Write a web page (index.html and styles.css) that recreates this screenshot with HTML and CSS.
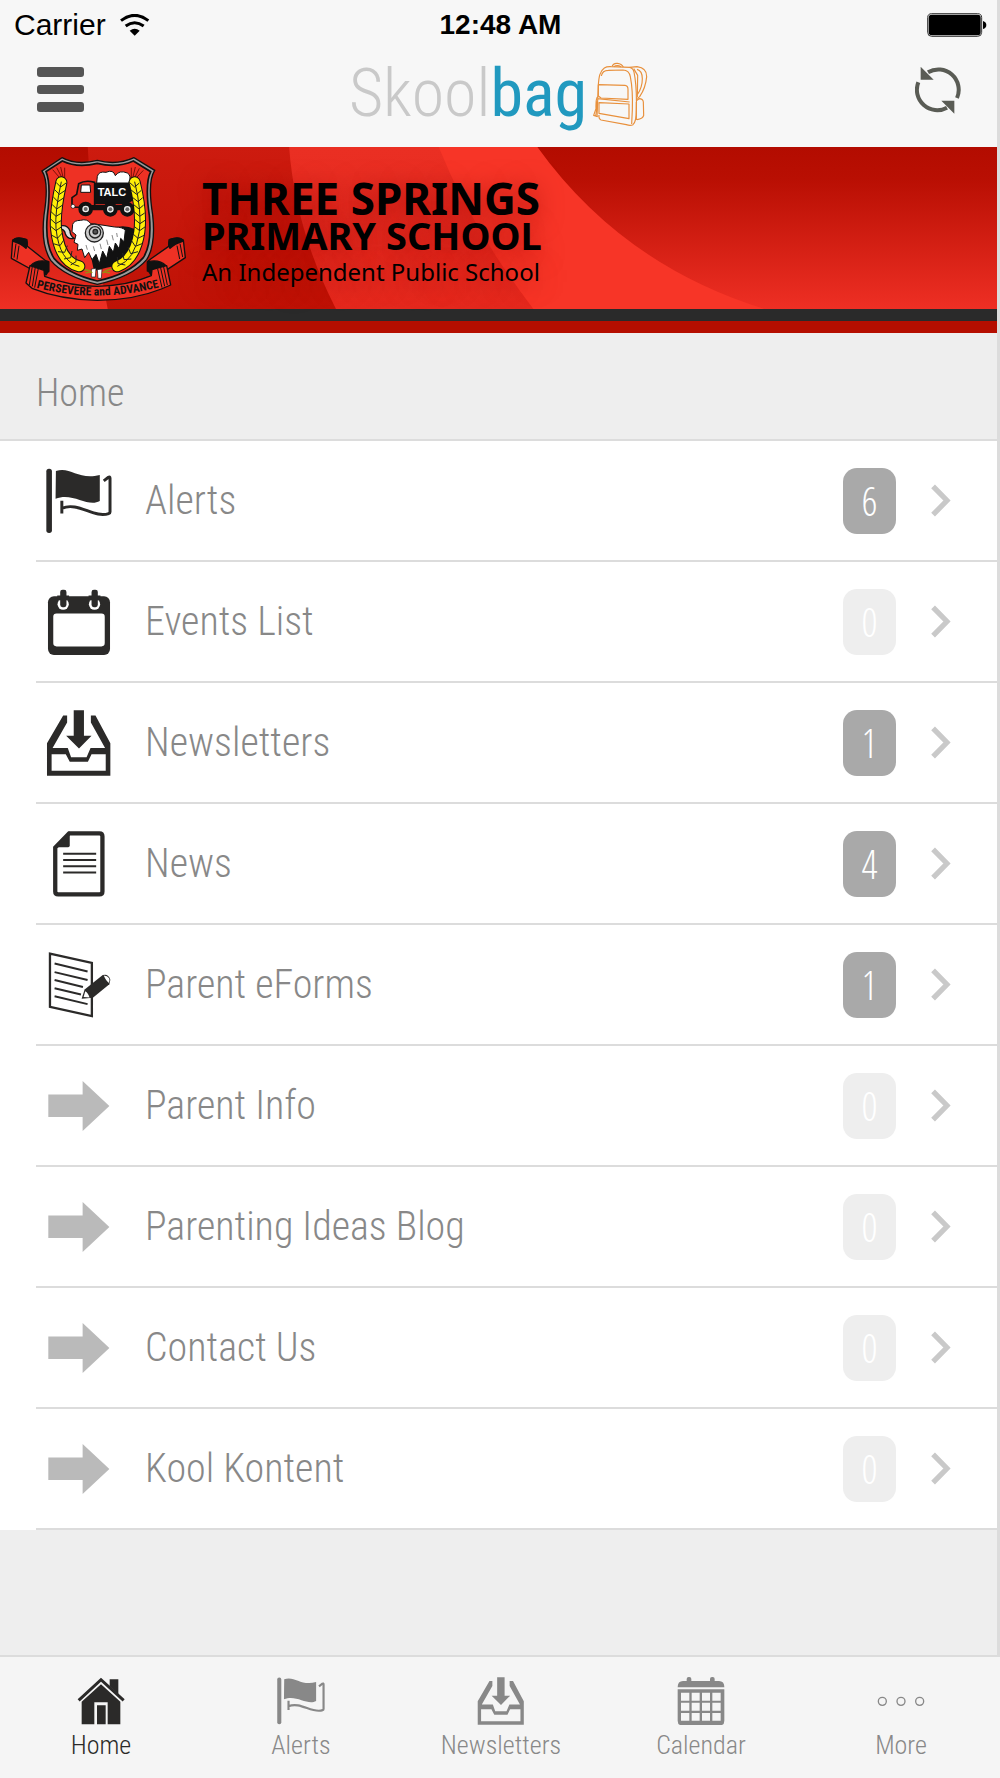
FILE: index.html
```html
<!DOCTYPE html>
<html lang="en">
<head>
<meta charset="utf-8">
<meta name="viewport" content="width=device-width, initial-scale=1">
<title>Skoolbag - Three Springs Primary School</title>
<link rel="stylesheet" href="styles.css">
</head>
<body>
<svg class="sprite" aria-hidden="true">
  <symbol id="flag" viewBox="0 0 200 200">
    <rect x="1" y="2" width="17" height="195" rx="8"/>
    <path d="M30 9C74-6 98 38 163 21V100C126 121 82 72 29 93Z"/>
    <path d="M175 39l14-11q5-3 5 3V133q0 4-4 5C146 154 98 101 48 122M48 99V138" fill="none" stroke="currentColor" stroke-width="9"/>
  </symbol>
  <symbol id="inbox" viewBox="0 0 200 200">
    <path fill-rule="evenodd" d="M3 101L52 17H64V38L20 115H66L76 143H123L135 115H179L136 38V17H150L195 101V199H3ZM17 134V184H181V134H138L127 157H72L60 134Z"/>
    <path d="M84 1H115V78H138L100 117L61 78H84Z"/>
  </symbol>
  <symbol id="arrow" viewBox="0 0 200 200">
    <path d="M7 65H111V24L192 100L111 176V133H7Z"/>
  </symbol>
  <symbol id="chevron" viewBox="0 0 60 100">
    <path d="M6 7L48 50L6 93" fill="none" stroke="currentColor" stroke-width="16"/>
  </symbol>
</svg>

<div class="screen">
  <div class="status">
    <div class="carrier">Carrier
      <svg width="30" height="22" viewBox="356 38 90 66" aria-label="Wi-Fi"><path d="M359 58Q400 26 441 58M373 74Q400 54 427 74" fill="none" stroke="#000" stroke-width="9"/><path d="M385 88Q400 77 415 88L400 103Z"/></svg>
    </div>
    <time class="clock">12:48 AM</time>
    <svg class="battery" width="60" height="24" viewBox="0 0 180 72" aria-label="Battery full"><rect x="2" y="2" width="162" height="68" rx="12" fill="none" stroke="#333" stroke-width="3"/><rect x="5" y="5" width="156" height="62" rx="9"/><path d="M168 24q10 3 10 12t-10 12Z"/></svg>
  </div>

  <header class="navbar">
    <button class="icon-button" type="button" aria-label="Menu">
      <svg width="48" height="46" viewBox="0 0 48 46" fill="#555"><rect x="1" width="47" height="10" rx="3"/><rect x="1" y="18" width="47" height="9" rx="3"/><rect x="1" y="35" width="47" height="10" rx="3"/></svg>
    </button>
    <div class="logo"><span class="logo-skool">Skool</span><span class="logo-bag">bag</span>
      <svg width="55" height="64" viewBox="276 186 165 192" fill="none" stroke="#e8903c" stroke-width="3.5" stroke-linejoin="round" aria-hidden="true">
        <path d="M292 254C294 230 296 214 310 204Q318 199 330 200L386 202Q396 204 399 216Q408 260 406 330Q406 366 396 374Q388 378 376 374L300 360Q292 356 294 345"/>
        <path d="M301 228Q304 211 322 211L366 210Q384 210 388 230Q396 270 394 330L392 372"/>
        <path d="M333 200Q336 189 349 190Q362 191 367 201M338 200Q349 194 360 200"/>
        <path d="M386 202L408 200Q438 204 437 230Q434 264 416 290L409 296M408 208Q424 212 424 236Q424 262 409 284M398 206L410 226L409 292"/>
        <path d="M292 254L372 256Q381 257 381 268V298L300 294L292 288Z"/>
        <path d="M290 296L386 306M294 308L384 312V356L294 340ZM292 254L288 350"/>
        <path d="M290 290Q284 296 285 326L278 346L290 350M288 304V326L284 348"/>
        <path d="M406 302L414 296Q426 296 427 306L428 346Q426 356 408 359M406 306V360"/>
      </svg>
    </div>
    <button class="icon-button refresh" type="button" aria-label="Refresh">
      <svg width="46" height="48" viewBox="1244 196 138 144" fill="none" stroke="#5a5c55" stroke-width="12" aria-hidden="true"><path d="M1283 215A61 61 0 0 1 1370 292M1254 245A61 61 0 0 0 1340 321"/><path d="M1261 198V237H1300ZM1362 339V300H1323Z" fill="#5a5c55" stroke="none"/></svg>
    </button>
  </header>

  <section class="banner">
    <svg class="banner-art" viewBox="0 0 1000 162" preserveAspectRatio="none" aria-hidden="true">
      <defs>
        <linearGradient id="g1" x2="0" y2="1"><stop offset="0" stop-color="#b30c00"/><stop offset=".2" stop-color="#b90f03"/><stop offset="1" stop-color="#ee2f24"/></linearGradient>
        <linearGradient id="g2" x2="0" y2="1"><stop offset="0" stop-color="#cd1b0f"/><stop offset="1" stop-color="#bf1206"/></linearGradient>
        <linearGradient id="g3" x2="0" y2="1"><stop offset="0" stop-color="#ea2f23"/><stop offset="1" stop-color="#e5291e"/></linearGradient>
      </defs>
      <rect width="1000" height="162" fill="url(#g1)"/>
      <path d="M88 0H310L340 162H108Q92 80 88 0Z" fill="url(#g2)"/>
      <path d="M290 0H480L600 162H337Q296 82 290 0Z" fill="url(#g3)"/>
      <path d="M440 0H539Q624 118 767 162H535Q472 80 440 0Z" fill="#f73527"/>
    </svg>
    <div class="banner-content">
      <svg class="crest" viewBox="24 30 540 444" role="img" aria-label="Three Springs Primary School crest">
        <g stroke="#111" stroke-width="4" stroke-linejoin="round">
          <path d="M38 285Q54 274 80 284L82 304L138 348L146 350V380L92 372L34 340Z" fill="#ee3124"/>
          <path d="M550 285Q534 274 508 284L506 304L452 342L442 350V378L498 376L556 338Z" fill="#ee3124"/>
          <path d="M38 288Q48 272 80 284Q84 300 78 310Q64 296 38 288ZM550 288Q540 272 508 284Q504 300 510 310Q524 296 550 288ZM92 362Q110 342 146 350V378L138 390Q122 370 92 362ZM498 362Q478 342 444 350V376L452 388Q470 370 498 362Z" fill="#111"/>
          <path d="M90 362L132 376L134 394Q212 424 292 424Q384 422 454 392L456 374L500 362L512 420L484 432Q400 466 292 466Q180 464 96 430L78 414Z" fill="#ee3124"/>
          <path d="M97 364L88 420M106 366L97 424M115 370L104 428M491 366L502 420M482 369L494 424M473 372L486 428M48 296L42 338M57 302L51 344M540 296L548 336M531 302L539 342" fill="none" stroke-width="3"/>
        </g>
        <path d="M186 38Q230 62 292 46Q350 62 402 38L464 76Q442 110 458 210Q468 300 440 344Q396 396 292 418Q192 394 152 346Q122 300 132 210Q148 110 126 78Z" fill="#999" stroke="#111" stroke-width="4"/>
        <path d="M187 48Q232 70 292 55Q350 70 400 48L452 80Q434 116 448 212Q456 298 430 338Q386 388 292 408Q202 386 162 340Q134 296 142 212Q154 118 138 80Z" fill="#ee3124" stroke="#111" stroke-width="5"/>
        <path d="M292 94Q296 78 318 82Q340 72 346 92Q358 74 382 84Q396 92 386 114H290Z" fill="#fff" stroke="#111" stroke-width="3"/>
        <path d="M216 186V158L230 148L236 116Q256 104 284 112V188Z" fill="#e0281c" stroke="#111" stroke-width="5"/>
        <path d="M244 120H270L272 142H242Z" fill="#fff" stroke="#111" stroke-width="3"/>
        <path d="M284 114H400V166L380 178H284ZM238 180H396V196H238Z" fill="#111"/>
        <text x="293" y="153" font-family="Liberation Sans, sans-serif" font-weight="700" font-size="33" fill="#fff">TALC</text>
        <g fill="#eee" stroke="#111" stroke-width="12"><circle cx="257" cy="192" r="16"/><circle cx="331" cy="193" r="16"/><circle cx="382" cy="193" r="16"/></g>
        <g fill="#666"><circle cx="257" cy="192" r="6"/><circle cx="331" cy="193" r="6"/><circle cx="382" cy="193" r="6"/></g>
        <circle cx="219" cy="184" r="6" fill="#fff" stroke="#111" stroke-width="2"/>
        <path d="M330 252Q370 236 404 252Q424 300 392 338Q370 360 320 368L282 378L272 330Z" fill="#111"/>
        <path d="M218 238Q222 226 242 226Q262 220 272 236Q310 240 344 246Q368 246 376 256L372 290L362 280L358 312L346 294L340 322L328 304L320 340L308 318L298 356L288 328L276 344L266 322L254 338L246 312L232 316L234 298L222 292L228 270L216 260Z" fill="#fff" stroke="#111" stroke-width="3"/>
        <path d="M300 296L304 312M320 284L324 300M336 270L340 286M258 300L262 314M280 304L284 318M350 264L352 276" stroke="#888" stroke-width="3"/>
        <g fill="none" stroke="#222" stroke-width="4"><circle cx="283" cy="264" r="27" fill="#ccc"/><circle cx="285" cy="262" r="17"/><circle cx="286" cy="260" r="7" fill="#555"/></g>
        <path d="M176 244Q202 236 210 258Q210 272 222 280Q202 284 196 266Q194 252 176 250Z" fill="#ddd" stroke="#111" stroke-width="4"/>
        <path d="M274 372L288 370L286 396H274ZM292 374L306 372L304 400H294Z" fill="#fff" stroke="#111" stroke-width="2"/>
        <path d="M240 374Q270 372 276 384M346 372Q320 372 308 384M256 384L272 380M330 384L312 380" fill="none" stroke="#9a8a10" stroke-width="5"/>
        <path d="M158 74L184 104M170 68L188 102M182 66L190 100M194 68V100M430 76L404 104M418 70L402 102M406 66L398 100M394 68V100" stroke="#7a1008" stroke-width="3"/>
        <g fill="none" stroke="#111" stroke-width="36" stroke-linecap="round"><path d="M184 112Q164 200 168 250Q178 350 238 364"/><path d="M404 112Q426 200 418 260Q406 344 352 364"/></g>
        <g fill="none" stroke="#ffee08" stroke-width="30" stroke-linecap="round"><path d="M184 112Q164 200 168 250Q178 350 238 364"/><path d="M404 112Q426 200 418 260Q406 344 352 364"/></g>
        <g fill="none" stroke="#222" stroke-width="3">
          <path d="M184 110Q164 200 168 250Q178 350 238 364M404 110Q426 200 418 260Q406 344 352 364"/>
          <path d="M168 112l14 14l16-12M164 134l14 14l18-12M160 156l14 14l18-12M156 178l14 14l18-12M153 200l15 14l17-10M152 222l15 14l18-10M152 244l16 13l17-12M154 270l18 10l15-16M160 296l20 6l12-18M174 320l20 2l8-20M192 342l20-4l4-20M212 360l16-10l0-18"/>
          <path d="M388 112l16 14l14-12M392 134l18 14l14-12M396 156l18 14l14-12M400 178l17 14l14-12M402 200l17 14l15-10M403 222l17 14l15-10M402 244l17 13l17-12M398 266l16 14l20-10M394 286l12 18l20-8M384 306l8 20l22-6M368 324l4 20l22-2M352 336l2 20l22 4"/>
        </g>
        <path id="motto" d="M109 428Q290 476 480 426" fill="none"/>
        <text font-family="Roboto Condensed, sans-serif" font-weight="700" font-size="35" fill="#111"><textPath href="#motto">PERSEVERE and ADVANCE</textPath></text>
      </svg>
      <div class="school">
        <h1 class="school-name">THREE SPRINGS</h1>
        <p class="school-type">PRIMARY SCHOOL</p>
        <p class="school-tag">An Independent Public School</p>
      </div>
    </div>
  </section>

  <main class="main">
    <h2 class="section-title">Home</h2>
    <ul class="menu">
      <li><a class="row" href="#alerts"><svg class="row-icon"><use href="#flag"/></svg><span class="row-label">Alerts</span><span class="badge">6</span><svg class="chevron"><use href="#chevron"/></svg></a></li>
      <li><a class="row" href="#events"><svg class="row-icon" viewBox="0 0 200 200"><rect x="6" y="22" width="188" height="178" rx="18"/><g fill="#fff"><rect x="22" y="74" width="156" height="100" rx="10"/><circle cx="52" cy="46" r="17"/><circle cx="147" cy="46" r="17"/></g><path d="M34 20H70V34H34ZM129 20H165V34H129Z"/><rect x="43" y="2" width="19" height="53" rx="7"/><rect x="138" y="2" width="19" height="53" rx="7"/></svg><span class="row-label">Events List</span><span class="badge empty">0</span><svg class="chevron"><use href="#chevron"/></svg></a></li>
      <li><a class="row" href="#newsletters"><svg class="row-icon"><use href="#inbox"/></svg><span class="row-label">Newsletters</span><span class="badge">1</span><svg class="chevron"><use href="#chevron"/></svg></a></li>
      <li><a class="row" href="#news"><svg class="row-icon" viewBox="0 0 200 200"><path d="M70 7H162Q171 7 171 16V183Q171 192 162 192H37Q28 192 28 183V50Z" fill="none" stroke="currentColor" stroke-width="13"/><path d="M24 49L72 1V44Q72 49 67 49Z"/><path d="M52 69H152M52 88H152M52 107H152M52 126H152" stroke="currentColor" stroke-width="6"/></svg><span class="row-label">News</span><span class="badge">4</span><svg class="chevron"><use href="#chevron"/></svg></a></li>
      <li><a class="row" href="#eforms"><svg class="row-icon" viewBox="0 0 200 200"><path d="M12 5L139 33V194L12 166Z" fill="none" stroke="currentColor" stroke-width="7"/><path d="M26 35L126 59M26 61L126 85M26 85L112 106M26 110L106 129M26 134L126 158" stroke="currentColor" stroke-width="6"/><path d="M108 142L117 114L172 70Q188 64 195 84L192 98L142 139Z"/><path d="M114 136L119 119Q128 124 132 138ZM175 71Q182 88 191 94Q198 74 175 71Z" fill="#fff"/></svg><span class="row-label">Parent eForms</span><span class="badge">1</span><svg class="chevron"><use href="#chevron"/></svg></a></li>
      <li><a class="row" href="#info"><svg class="row-icon plain"><use href="#arrow"/></svg><span class="row-label">Parent Info</span><span class="badge empty">0</span><svg class="chevron"><use href="#chevron"/></svg></a></li>
      <li><a class="row" href="#blog"><svg class="row-icon plain"><use href="#arrow"/></svg><span class="row-label">Parenting Ideas Blog</span><span class="badge empty">0</span><svg class="chevron"><use href="#chevron"/></svg></a></li>
      <li><a class="row" href="#contact"><svg class="row-icon plain"><use href="#arrow"/></svg><span class="row-label">Contact Us</span><span class="badge empty">0</span><svg class="chevron"><use href="#chevron"/></svg></a></li>
      <li><a class="row" href="#kool"><svg class="row-icon plain"><use href="#arrow"/></svg><span class="row-label">Kool Kontent</span><span class="badge empty">0</span><svg class="chevron"><use href="#chevron"/></svg></a></li>
    </ul>
  </main>
</div>

<nav class="tabs" aria-label="Main">
  <a class="tab active" href="#home" aria-current="page"><svg class="tab-icon" viewBox="0 0 144 144"><path d="M5 70L72 8L140 70" fill="none" stroke="currentColor" stroke-width="9"/><path d="M98 7H124V52L98 28ZM72 22L130 74V142H92V76H52V142H14V74ZM60 85H86V142H60Z"/></svg>Home</a>
  <a class="tab" href="#alerts"><svg class="tab-icon"><use href="#flag"/></svg>Alerts</a>
  <a class="tab" href="#newsletters"><svg class="tab-icon"><use href="#inbox"/></svg>Newsletters</a>
  <a class="tab" href="#calendar"><svg class="tab-icon" viewBox="0 0 144 144"><path d="M2 31Q2 12 18 12H126Q142 12 142 31Z"/><rect x="29" width="14" height="20" rx="6"/><rect x="99" width="14" height="20" rx="6"/><path fill-rule="evenodd" d="M2 37H142V131Q142 145 129 145H15Q2 145 2 131ZM12 47V71H37V47ZM44 47V71H68V47ZM75 47V71H99V47ZM106 47V71H131V47ZM12 77V101H37V77ZM44 77V101H68V77ZM75 77V101H99V77ZM106 77V101H131V77ZM12 108V131H37V108ZM44 108V131H68V108ZM75 108V131H99V108ZM106 108V131H131V108Z"/></svg>Calendar</a>
  <a class="tab" href="#more"><svg class="tab-icon" viewBox="0 0 144 144" ><g fill="none" stroke="currentColor" stroke-width="4"><circle cx="16" cy="73" r="12"/><circle cx="72" cy="73" r="12"/><circle cx="128" cy="73" r="12"/></g></svg>More</a>
</nav>
</body>
</html>
```

FILE: styles.css
```css
* { box-sizing: border-box; }

body {
  margin: 0;
  min-height: 100vh;
  display: flex;
  flex-direction: column;
  background: #eee;
  color: #888;
  font-family: "Roboto Condensed", Roboto, sans-serif;
  font-weight: 300;
  fill: currentColor;
}

a { color: inherit; text-decoration: none; }
svg { display: block; flex: none; }
h1, h2, p, ul { margin: 0; padding: 0; font-weight: inherit; }

.sprite { display: none; }

.screen {
  flex: 1;
  display: flex;
  flex-direction: column;
  border-right: 3px solid #dcdcdc;
}

/* Status bar */
.status {
  display: grid;
  grid-template-columns: 1fr auto 1fr;
  align-items: center;
  height: 50px;
  padding: 0 10px 0 14px;
  background: #f7f7f7;
  color: #000;
  font: 400 30px/34px "Liberation Sans", Arial, sans-serif;
}
.carrier { display: flex; align-items: center; gap: 14px; }
.clock { font-weight: 700; font-size: 28px; }
.battery { justify-self: end; }

/* Title bar */
.navbar {
  display: grid;
  grid-template-columns: 1fr auto 1fr;
  align-items: center;
  height: 97px;
  padding: 0 36px 18px;
  background: #f7f7f7;
}
.icon-button { justify-self: start; padding: 0; border: 0; background: none; }
.refresh { justify-self: end; }
.logo { display: flex; align-items: center; padding-top: 8px; font-size: 66px; line-height: 72px; }
.logo svg { margin-left: 6px; }
.logo-skool { color: #c9c9c9; }
.logo-bag { color: #2199bf; font-weight: 400; }

/* School banner */
.banner {
  display: grid;
  background: #b50e00;
  padding-bottom: 12px;
}
.banner-art, .banner-content { grid-area: 1 / 1; }
.banner-art { width: 100%; height: 100%; border-bottom: 12px solid #2a2a2a; }
.banner-content { display: flex; gap: 14px; padding: 8px 8px 18px; }
.crest { width: 180px; height: 148px; }
.school {
  padding-top: 23px;
  color: #000;
  font-family: "Noto Sans", sans-serif;
  text-shadow: 0 4px 24px rgba(150, 0, 0, .6);
}
.school-name { font-size: 44px; line-height: 40px; font-weight: 700; }
.school-type { font-size: 38px; line-height: 34px; font-weight: 700; }
.school-tag { font-size: 24px; line-height: 40px; font-weight: 400; }

/* Menu list */
.section-title {
  height: 108px;
  padding: 37px 36px 0;
  border-bottom: 2px solid #dcdcdc;
  font-size: 38px;
  line-height: 46px;
}
.menu { list-style: none; background: #fff; }
.row {
  display: flex;
  align-items: center;
  height: 121px;
  margin-left: 36px;
  padding: 0 46px 0 10px;
  border-bottom: 2px solid #dcdcdc;
  font-size: 40px;
}
.row-icon { width: 66px; height: 66px; color: #2b2a29; }
.row-icon.plain { color: #bababa; }
.row-label { flex: 1; margin-left: 33px; line-height: 48px; }
.badge {
  width: 53px;
  margin-right: 35px;
  border-radius: 14px;
  background: #a9a9a9;
  color: #fff;
  font: 40px/66px "Open Sans Condensed Light", "Roboto Condensed", sans-serif;
  text-align: center;
}
.badge.empty { background: #eee; }
.chevron { width: 20px; height: 33px; color: #c9c9c9; }

/* Tab bar */
.tabs {
  display: grid;
  grid-template-columns: repeat(5, 1fr);
  border-top: 2px solid #dcdcdc;
  background: #f5f5f5;
}
.tab {
  display: flex;
  flex-direction: column;
  align-items: center;
  gap: 4px;
  padding: 20px 0 17px 2px;
  font-size: 26px;
  line-height: 32px;
}
.tab.active { color: #2b2a29; }
.tab-icon { width: 48px; height: 48px; }
```
